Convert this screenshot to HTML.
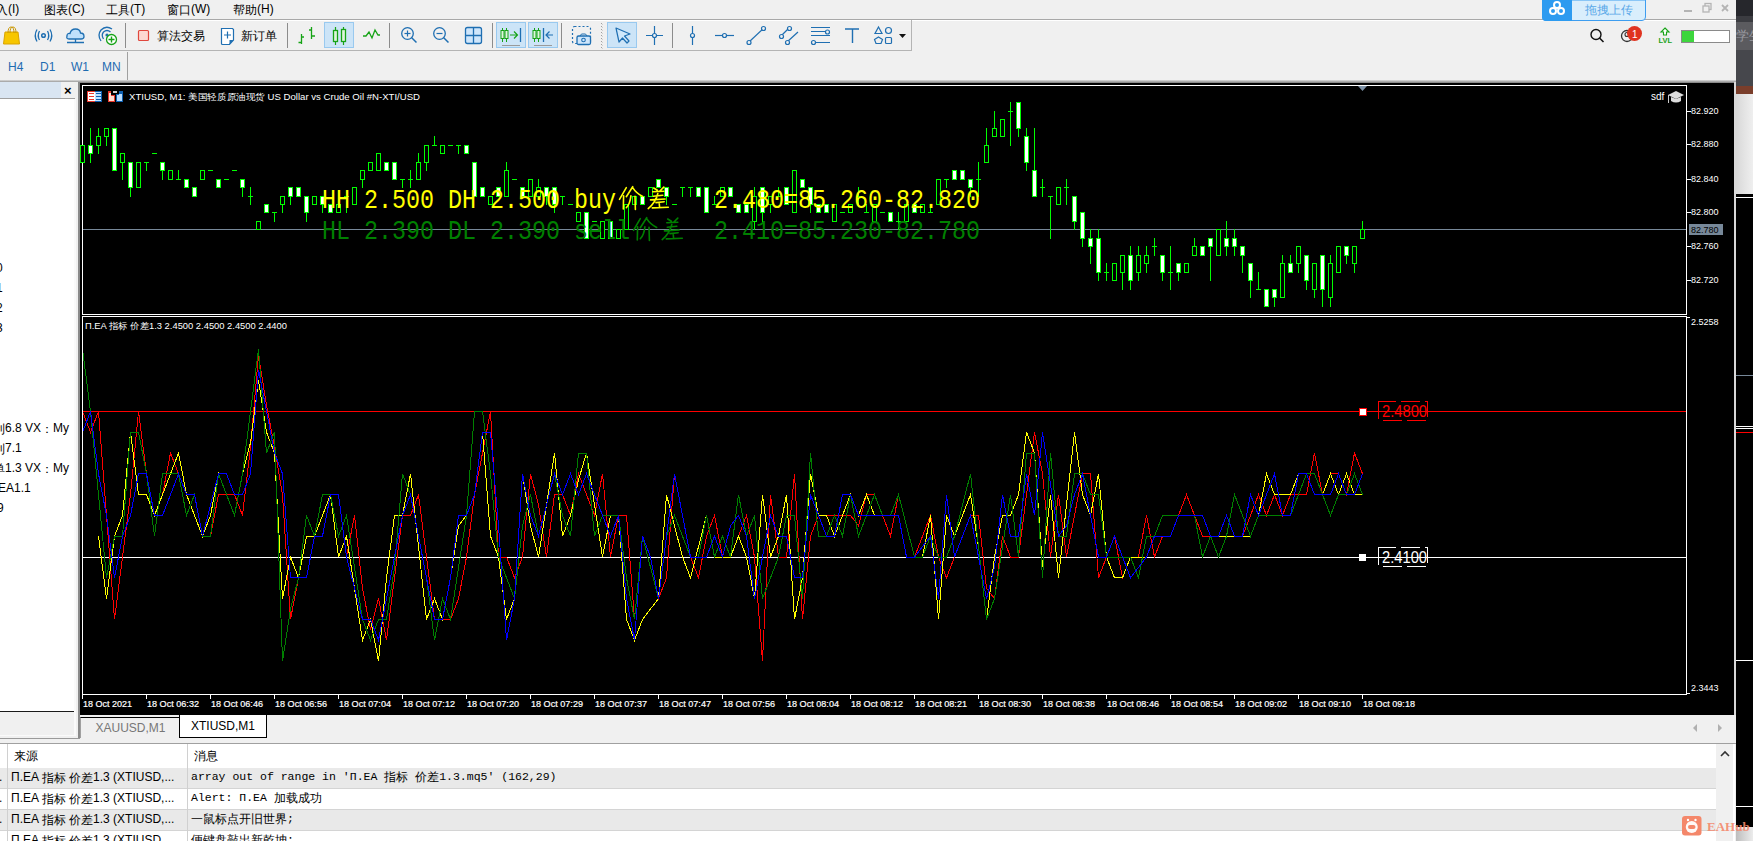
<!DOCTYPE html><html><head><meta charset="utf-8"><style>
*{margin:0;padding:0;box-sizing:border-box}
html,body{width:1753px;height:841px;overflow:hidden;background:#f0f0f0;font-family:"Liberation Sans",sans-serif;position:relative}
.a{position:absolute;white-space:nowrap}
.menu{font-size:12px;color:#000;top:2px}
.hl{position:absolute;background:#c8c8c8}
.tf{font-size:12px;color:#1e6bb0;top:60px}
.cj{display:inline-block;vertical-align:top;text-align:left}
</style></head><body><div class="a" style="left:1736px;top:0;width:17px;height:16px;background:#26272c"></div><div class="a" style="left:1736px;top:16px;width:17px;height:6px;background:#3b3c41"></div><div class="a" style="left:1736px;top:22px;width:17px;height:28px;background:#5b5b5f;color:#9a9aa0;font-size:13px;line-height:28px;overflow:hidden"><span class="cj" style="width:24px">学生</span></div><div class="a" style="left:1736px;top:50px;width:17px;height:36px;background:#46474c"></div><div class="a" style="left:1736px;top:86px;width:17px;height:8px;background:#7a3e2b"></div><div class="a" style="left:1736px;top:94px;width:17px;height:100px;background:linear-gradient(90deg,#d8d8d8,#efefef)"></div><div class="a" style="left:1736px;top:194px;width:17px;height:647px;background:#000"></div><div class="a" style="left:1736px;top:197px;width:17px;height:1px;background:#fff"></div><div class="a" style="left:1736px;top:375px;width:17px;height:1px;background:#778899"></div><div class="a" style="left:1736px;top:426px;width:17px;height:1px;background:#fff"></div><div class="a" style="left:1736px;top:428px;width:17px;height:1px;background:#fff"></div><div class="a" style="left:1736px;top:432px;width:17px;height:1px;background:#f00"></div><div class="a" style="left:1736px;top:660px;width:17px;height:1px;background:#fff"></div><div class="a" style="left:1736px;top:806px;width:17px;height:1px;background:#fff"></div><div class="a" style="left:1736px;top:827px;width:17px;height:2px;background:#e8e8e8"></div><div class="a" style="left:1736px;top:829px;width:17px;height:12px;background:linear-gradient(90deg,#bdbdbd,#ececec)"></div><div class="a menu" style="left:-4px"><span class="cj" style="width:12px">入</span>(I)</div><div class="a menu" style="left:44px"><span class="cj" style="width:24px">图表</span>(C)</div><div class="a menu" style="left:106px"><span class="cj" style="width:24px">工具</span>(T)</div><div class="a menu" style="left:167px"><span class="cj" style="width:24px">窗口</span>(W)</div><div class="a menu" style="left:233px"><span class="cj" style="width:24px">帮助</span>(H)</div><div class="hl" style="left:0;top:19px;width:1736px;height:1px;background:#a8a8a8"></div><div class="hl" style="left:0;top:20px;width:1736px;height:1px;background:#ffffff"></div><svg class="a" style="left:0;top:0" width="1753" height="52"><rect x="125.0" y="23" width="1" height="25" fill="#8c8c8c"/><rect x="287.0" y="23" width="1" height="25" fill="#8c8c8c"/><rect x="389.0" y="23" width="1" height="25" fill="#8c8c8c"/><rect x="492.0" y="23" width="1" height="25" fill="#8c8c8c"/><rect x="561.0" y="23" width="1" height="25" fill="#8c8c8c"/><rect x="672.0" y="23" width="1" height="25" fill="#8c8c8c"/><rect x="601" y="23" width="1" height="1" fill="#a0a0a0"/><rect x="602" y="24" width="1" height="1" fill="#d0d0d0"/><rect x="601" y="26" width="1" height="1" fill="#a0a0a0"/><rect x="602" y="27" width="1" height="1" fill="#d0d0d0"/><rect x="601" y="29" width="1" height="1" fill="#a0a0a0"/><rect x="602" y="30" width="1" height="1" fill="#d0d0d0"/><rect x="601" y="32" width="1" height="1" fill="#a0a0a0"/><rect x="602" y="33" width="1" height="1" fill="#d0d0d0"/><rect x="601" y="35" width="1" height="1" fill="#a0a0a0"/><rect x="602" y="36" width="1" height="1" fill="#d0d0d0"/><rect x="601" y="38" width="1" height="1" fill="#a0a0a0"/><rect x="602" y="39" width="1" height="1" fill="#d0d0d0"/><rect x="601" y="41" width="1" height="1" fill="#a0a0a0"/><rect x="602" y="42" width="1" height="1" fill="#d0d0d0"/><rect x="601" y="44" width="1" height="1" fill="#a0a0a0"/><rect x="602" y="45" width="1" height="1" fill="#d0d0d0"/><rect x="601" y="47" width="1" height="1" fill="#a0a0a0"/><rect x="602" y="48" width="1" height="1" fill="#d0d0d0"/><rect x="324.5" y="22.5" width="29" height="25" fill="#cce4f7" stroke="#99c9ef"/><rect x="496.5" y="22.5" width="29" height="25" fill="#cce4f7" stroke="#99c9ef"/><rect x="528.5" y="22.5" width="29" height="25" fill="#cce4f7" stroke="#99c9ef"/><rect x="607.5" y="22.5" width="29" height="25" fill="#cce4f7" stroke="#99c9ef"/><path d="M5 32 L18 32 L19.5 44 L3.5 44 Z" fill="#f7c600" stroke="#d9a300" stroke-width="1"/><path d="M8 33 Q8 27 11 27 Q14 27 14 33 M10 33 Q10 27 13 27 Q16 27 16 33" fill="none" stroke="#c99600" stroke-width="1"/><circle cx="43.5" cy="35.5" r="1.8" fill="none" stroke="#1f6fb2" stroke-width="1.5"/><path d="M39.5 31 Q37 35.5 39.5 40 M47.5 31 Q50 35.5 47.5 40 M37 29.5 Q33.5 35.5 37 41.5 M50 29.5 Q53.5 35.5 50 41.5" fill="none" stroke="#1f6fb2" stroke-width="1.3"/><path d="M69 39 Q66 39 67 36 Q67 33 70 33.5 Q71 29 75.5 29 Q80 29 80.5 33 Q84 33 84 36.5 Q84 39 81 39 Z" fill="#bfe0fb" stroke="#1f6fb2" stroke-width="1.3"/><path d="M75.5 39 L75.5 42 M67 42.5 L84 42.5" stroke="#1f6fb2" stroke-width="1.3"/><path d="M101 41 Q97 35 101 30 Q106 25 112 29 M103.5 39 Q101 35 103.5 32 Q107 29 110.5 32" fill="none" stroke="#1f6fb2" stroke-width="1.3"/><circle cx="107" cy="35" r="1.6" fill="#1f6fb2"/><circle cx="111.5" cy="39.5" r="5" fill="#fff" stroke="#16a316" stroke-width="1.3"/><path d="M111.5 36.5 L111.5 42.5 M108.5 39.5 L114.5 39.5" stroke="#16a316" stroke-width="1.4"/><rect x="138.5" y="30.5" width="10" height="10" rx="1" fill="#fdd9d2" stroke="#e0473d" stroke-width="1.2"/><path d="M221.5 28.5 L232.5 28.5 L233.5 29.5 L233.5 40 L229.5 44.5 L222.5 44.5 Q221.5 44.5 221.5 43.5 Z" fill="#fff" stroke="#1f6fb2" stroke-width="1.2"/><path d="M233.5 40 L229.5 40 L229.5 44.5 Z" fill="#1f6fb2"/><path d="M227.5 31.5 L227.5 38.5 M224 35 L231 35" stroke="#1f6fb2" stroke-width="1.2"/><path d="M301.5 34 L301.5 44 M298.5 42.5 L301.5 42.5 M301.5 37 L304 37 M311.5 27 L311.5 39 M309 30 L311.5 30 M311.5 36 L315 36" stroke="#16a316" stroke-width="1.3" fill="none"/><path d="M335.5 27 L335.5 45 M343.5 27 L343.5 45" stroke="#16a316" stroke-width="1.2"/><rect x="333.5" y="30.5" width="4" height="11" fill="#dff5df" stroke="#16a316" stroke-width="1.3"/><rect x="341.5" y="29.5" width="4" height="12" fill="#dff5df" stroke="#16a316" stroke-width="1.3"/><path d="M363 36 L366 36 L369 32 L372 38 L375 30 L378 35 L380 35" fill="none" stroke="#16a316" stroke-width="1.3"/><circle cx="407.5" cy="33.5" r="5.8" fill="none" stroke="#1f6fb2" stroke-width="1.3"/><path d="M411.5 37.5 L416.5 42.5" stroke="#1f6fb2" stroke-width="1.5"/><path d="M404.5 33.5 L410.5 33.5" stroke="#1f6fb2" stroke-width="1.2"/><path d="M407.5 30.5 L407.5 36.5" stroke="#1f6fb2" stroke-width="1.2"/><circle cx="439.5" cy="33.5" r="5.8" fill="none" stroke="#1f6fb2" stroke-width="1.3"/><path d="M443.5 37.5 L448.5 42.5" stroke="#1f6fb2" stroke-width="1.5"/><path d="M436.5 33.5 L442.5 33.5" stroke="#1f6fb2" stroke-width="1.2"/><rect x="465.5" y="27.5" width="16" height="16" rx="2" fill="#cfe6fb" stroke="#1f6fb2" stroke-width="1.3"/><path d="M473.5 27.5 L473.5 43.5 M465.5 35.5 L481.5 35.5" stroke="#1f6fb2" stroke-width="1.3"/><path d="M502.5 28 L502.5 42 M506.5 28 L506.5 42" stroke="#16a316" stroke-width="1"/><rect x="501" y="30.5" width="3" height="8" fill="#dff5df" stroke="#16a316"/><rect x="505" y="30.5" width="3" height="8" fill="#dff5df" stroke="#16a316"/><path d="M510 35 L517 35 M514 31.5 L517.5 35 L514 38.5" fill="none" stroke="#16a316" stroke-width="1.2"/><path d="M520.5 28 L520.5 42" stroke="#1f6fb2" stroke-width="1.3"/><path d="M502 45.5 L520 45.5" stroke="#9a9a9a"/><path d="M534.5 28 L534.5 42 M538.5 28 L538.5 42" stroke="#16a316" stroke-width="1"/><rect x="533" y="30.5" width="3" height="8" fill="#dff5df" stroke="#16a316"/><rect x="537" y="30.5" width="3" height="8" fill="#dff5df" stroke="#16a316"/><path d="M543.5 28 L543.5 42" stroke="#1f6fb2" stroke-width="1.3"/><path d="M553 35 L546 35 M549.5 31.5 L546 35 L549.5 38.5" fill="none" stroke="#1f6fb2" stroke-width="1.2"/><path d="M534 45.5 L552 45.5" stroke="#9a9a9a"/><rect x="572.5" y="26.5" width="18" height="17" rx="2" fill="none" stroke="#1f6fb2" stroke-width="1.2" stroke-dasharray="2 2"/><rect x="577" y="36" width="13.5" height="8.5" rx="1.5" fill="#cfe6fb" stroke="#1f6fb2" stroke-width="1.3"/><circle cx="583.5" cy="40" r="1.8" fill="none" stroke="#1f6fb2" stroke-width="1.1"/><path d="M580 36 L581.5 34 L585.5 34 L587 36" fill="none" stroke="#1f6fb2"/><path d="M616 28 L630 34 L624.5 36 L629 41 L627 43 L622.5 38 L619 42 Z" fill="#cfe8fb" stroke="#1f6fb2" stroke-width="1.2" stroke-linejoin="round"/><path d="M654.5 26 L654.5 45 M646 35.5 L663 35.5" stroke="#1f6fb2" stroke-width="1.2"/><circle cx="654.5" cy="35.5" r="2" fill="#f0f0f0" stroke="#1f6fb2" stroke-width="1.2"/><path d="M692.5 26 L692.5 45" stroke="#1f6fb2" stroke-width="1.2"/><circle cx="692.5" cy="35.5" r="2" fill="#f0f0f0" stroke="#1f6fb2" stroke-width="1.2"/><path d="M715 35.5 L734 35.5" stroke="#1f6fb2" stroke-width="1.2"/><circle cx="724.5" cy="35.5" r="2" fill="#f0f0f0" stroke="#1f6fb2" stroke-width="1.2"/><path d="M749 42 L764 28" stroke="#1f6fb2" stroke-width="1.2"/><circle cx="749" cy="42.5" r="2" fill="#f0f0f0" stroke="#1f6fb2" stroke-width="1.2"/><circle cx="763.5" cy="28.5" r="2" fill="#f0f0f0" stroke="#1f6fb2" stroke-width="1.2"/><path d="M781 36 L789 28 M787 42 L798 32" stroke="#1f6fb2" stroke-width="1.2"/><circle cx="781.5" cy="36.5" r="2" fill="#f0f0f0" stroke="#1f6fb2" stroke-width="1.2"/><circle cx="789.5" cy="28.5" r="2" fill="#f0f0f0" stroke="#1f6fb2" stroke-width="1.2"/><circle cx="787.5" cy="42.5" r="2" fill="#f0f0f0" stroke="#1f6fb2" stroke-width="1.2"/><path d="M811 27.5 L830 27.5 M811 31.5 L828 31.5 M811 35.5 L830 35.5 M815 42.5 L830 42.5" stroke="#1f6fb2" stroke-width="1.2"/><circle cx="827.5" cy="32" r="2" fill="#f0f0f0" stroke="#1f6fb2" stroke-width="1.2"/><circle cx="813.5" cy="42.5" r="2" fill="#f0f0f0" stroke="#1f6fb2" stroke-width="1.2"/><path d="M845 29 L859 29 M852.5 29 L852.5 43" stroke="#1f6fb2" stroke-width="1.4"/><path d="M878.5 27 L882 33.5 L875 33.5 Z" fill="none" stroke="#1f6fb2" stroke-width="1.2"/><circle cx="888.5" cy="30.5" r="3" fill="none" stroke="#1f6fb2" stroke-width="1.2"/><path d="M878.5 37 L882.5 39.5 L881 43.5 L876 43.5 L874.5 39.5 Z" fill="none" stroke="#1f6fb2" stroke-width="1.2"/><rect x="885.5" y="37.5" width="6" height="6" rx="1" fill="none" stroke="#1f6fb2" stroke-width="1.2"/><path d="M899 34 L906 34 L902.5 38 Z" fill="#111"/><circle cx="1596" cy="34.5" r="5" fill="none" stroke="#111" stroke-width="1.4"/><path d="M1599.5 38 L1603.5 42" stroke="#111" stroke-width="1.6"/><circle cx="1627" cy="36" r="5.5" fill="none" stroke="#333" stroke-width="1.3"/><circle cx="1627" cy="34.5" r="2" fill="none" stroke="#333" stroke-width="1.1"/><circle cx="1634.5" cy="33.5" r="7.5" fill="#e0331f"/><text x="1632" y="37.5" font-size="10" fill="#fff" font-family="Liberation Sans">1</text><path d="M1665 28 L1669 32 L1666.5 32 L1666.5 35 L1663.5 35 L1663.5 32 L1661 32 Z" fill="#fff" stroke="#17a317" stroke-width="1.1"/><text x="1658.5" y="43" font-size="7.5" font-weight="bold" fill="#17a317" font-family="Liberation Sans">LVL</text><rect x="1681.5" y="30.5" width="48" height="12" fill="#fff" stroke="#8a8a8a"/><rect x="1682" y="31" width="12" height="11" fill="#3dd63d"/><path d="M1542.5 0 L1645.5 0 L1645.5 17 Q1645.5 20.5 1642 20.5 L1546 20.5 Q1542.5 20.5 1542.5 17 Z" fill="#d9eefc" stroke="#3d9df0" stroke-width="1"/><path d="M1542 0 L1572 0 L1572 21 L1546 21 Q1542 21 1542 17 Z" fill="#2d9bf0"/><circle cx="1557" cy="5" r="3" fill="none" stroke="#fff" stroke-width="2"/><circle cx="1553" cy="11" r="3" fill="none" stroke="#fff" stroke-width="2"/><circle cx="1561" cy="11" r="3" fill="none" stroke="#fff" stroke-width="2"/><text x="1585" y="14" font-size="12" fill="#5aa8e8" font-family="Liberation Sans" textLength="48">拖拽上传</text><rect x="1684" y="10" width="8" height="2" fill="#b4b4b4"/><rect x="1705" y="3.5" width="6" height="6" fill="none" stroke="#b4b4b4" stroke-width="1.3"/><rect x="1703" y="6" width="6" height="6" fill="#f0f0f0" stroke="#b4b4b4" stroke-width="1.3"/><path d="M1722 5 L1728 11 M1728 5 L1722 11" stroke="#b4b4b4" stroke-width="1.8"/></svg><div class="a" style="left:157px;top:28px;font-size:12px;color:#000"><span class="cj" style="width:48px">算法交易</span></div><div class="a" style="left:241px;top:28px;font-size:12px;color:#000"><span class="cj" style="width:36px">新订单</span></div><div class="hl" style="left:0;top:50px;width:912px;height:1px;background:#b4b4b4"></div><div class="hl" style="left:911px;top:20px;width:1px;height:31px;background:#b4b4b4"></div><div class="a tf" style="left:8px">H4</div><div class="a tf" style="left:40px">D1</div><div class="a tf" style="left:71px">W1</div><div class="a tf" style="left:102px">MN</div><div class="hl" style="left:127px;top:52px;width:1px;height:29px;background:#a0a0a0"></div><div class="hl" style="left:0;top:80px;width:1736px;height:3px;background:linear-gradient(#dcdcdc,#7a7a7a)"></div><div class="a" style="left:80px;top:83px;width:1654px;height:632px;background:#000"></div><div class="a" style="left:78px;top:83px;width:2px;height:656px;background:#8a8a8a"></div><div class="a" style="left:1734px;top:82px;width:2px;height:633px;background:#d9d9d9"></div><div class="a" style="left:0;top:82px;width:78px;height:656px;background:#f0f0f0"></div><div class="a" style="left:74px;top:99px;width:2px;height:637px;background:#fafafa"></div><div class="a" style="left:0;top:735px;width:76px;height:1px;background:#fafafa"></div><div class="a" style="left:0;top:738px;width:80px;height:1px;background:#9a9a9a"></div><div class="a" style="left:0;top:82px;width:61px;height:16px;background:#d9e5f2"></div><div class="a" style="left:64px;top:83px;font-size:13px;font-weight:bold;color:#000">&#215;</div><div class="a" style="left:0;top:98px;width:75px;height:1px;background:#a0a0a0"></div><div class="a" style="left:0;top:99px;width:74px;height:612px;background:#fff"></div><div class="a" style="left:0;top:711px;width:74px;height:1px;background:#1a1a1a"></div><div class="a" style="left:0;top:99px;width:74px;height:612px;overflow:hidden"><div class="a" style="left:-7px;top:322px;font-size:12px;color:#000"><span class="cj" style="width:12px">利</span>6.8 VX<span class="cj" style="width:12px">：</span>My</div><div class="a" style="left:-7px;top:342px;font-size:12px;color:#000"><span class="cj" style="width:12px">利</span>7.1</div><div class="a" style="left:-7px;top:362px;font-size:12px;color:#000"><span class="cj" style="width:12px">单</span>1.3 VX<span class="cj" style="width:12px">：</span>My</div><div class="a" style="left:-2px;top:382px;font-size:12px;color:#000">EA1.1</div><div class="a" style="left:-3px;top:402px;font-size:12px;color:#000">9</div><div class="a" style="left:-4px;top:162px;font-size:12px;color:#000">0</div><div class="a" style="left:-4px;top:182px;font-size:12px;color:#000">1</div><div class="a" style="left:-4px;top:202px;font-size:12px;color:#000">2</div><div class="a" style="left:-4px;top:222px;font-size:12px;color:#000">3</div></div><svg class="a" style="left:0;top:0" width="1753" height="841" shape-rendering="crispEdges"><rect x="82" y="85" width="1605" height="1" fill="#fff"/><rect x="82" y="85" width="1" height="230" fill="#fff"/><rect x="1686" y="85" width="1" height="230" fill="#fff"/><rect x="82" y="314" width="1605" height="1" fill="#fff"/><rect x="82" y="316" width="1605" height="1" fill="#fff"/><rect x="82" y="316" width="1" height="379" fill="#fff"/><rect x="1686" y="316" width="1" height="379" fill="#fff"/><rect x="82" y="694" width="1605" height="1" fill="#fff"/><rect x="83" y="229" width="1603" height="1" fill="#778899"/><path d="M1358 86 L1367 86 L1362.5 91 Z" fill="#7d91a6" shape-rendering="auto"/><rect x="1686" y="111" width="5" height="1" fill="#fff"/><text x="1691" y="113.5" font-size="9" fill="#fff" font-family="Liberation Sans">82.920</text><rect x="1686" y="144" width="5" height="1" fill="#fff"/><text x="1691" y="146.5" font-size="9" fill="#fff" font-family="Liberation Sans">82.880</text><rect x="1686" y="179" width="5" height="1" fill="#fff"/><text x="1691" y="181.5" font-size="9" fill="#fff" font-family="Liberation Sans">82.840</text><rect x="1686" y="212" width="5" height="1" fill="#fff"/><text x="1691" y="214.5" font-size="9" fill="#fff" font-family="Liberation Sans">82.800</text><rect x="1686" y="246" width="5" height="1" fill="#fff"/><text x="1691" y="248.5" font-size="9" fill="#fff" font-family="Liberation Sans">82.760</text><rect x="1686" y="280" width="5" height="1" fill="#fff"/><text x="1691" y="282.5" font-size="9" fill="#fff" font-family="Liberation Sans">82.720</text><rect x="1689" y="224" width="34" height="11" fill="#778899"/><text x="1691" y="233" font-size="9" fill="#000" font-family="Liberation Sans">82.780</text><rect x="1686" y="317" width="4" height="1" fill="#fff"/><text x="1691" y="325" font-size="9" fill="#fff" font-family="Liberation Sans">2.5258</text><rect x="1686" y="693" width="4" height="1" fill="#fff"/><text x="1691" y="691" font-size="9" fill="#fff" font-family="Liberation Sans">2.3443</text><rect x="82" y="695" width="1" height="4" fill="#fff"/><text x="83" y="707" font-size="9" fill="#fff" stroke="#fff" stroke-width="0.2" font-family="Liberation Sans" textLength="49" lengthAdjust="spacingAndGlyphs">18 Oct 2021</text><rect x="146" y="695" width="1" height="4" fill="#fff"/><text x="147" y="707" font-size="9" fill="#fff" stroke="#fff" stroke-width="0.2" font-family="Liberation Sans" textLength="52" lengthAdjust="spacingAndGlyphs">18 Oct 06:32</text><rect x="210" y="695" width="1" height="4" fill="#fff"/><text x="211" y="707" font-size="9" fill="#fff" stroke="#fff" stroke-width="0.2" font-family="Liberation Sans" textLength="52" lengthAdjust="spacingAndGlyphs">18 Oct 06:46</text><rect x="274" y="695" width="1" height="4" fill="#fff"/><text x="275" y="707" font-size="9" fill="#fff" stroke="#fff" stroke-width="0.2" font-family="Liberation Sans" textLength="52" lengthAdjust="spacingAndGlyphs">18 Oct 06:56</text><rect x="338" y="695" width="1" height="4" fill="#fff"/><text x="339" y="707" font-size="9" fill="#fff" stroke="#fff" stroke-width="0.2" font-family="Liberation Sans" textLength="52" lengthAdjust="spacingAndGlyphs">18 Oct 07:04</text><rect x="402" y="695" width="1" height="4" fill="#fff"/><text x="403" y="707" font-size="9" fill="#fff" stroke="#fff" stroke-width="0.2" font-family="Liberation Sans" textLength="52" lengthAdjust="spacingAndGlyphs">18 Oct 07:12</text><rect x="466" y="695" width="1" height="4" fill="#fff"/><text x="467" y="707" font-size="9" fill="#fff" stroke="#fff" stroke-width="0.2" font-family="Liberation Sans" textLength="52" lengthAdjust="spacingAndGlyphs">18 Oct 07:20</text><rect x="530" y="695" width="1" height="4" fill="#fff"/><text x="531" y="707" font-size="9" fill="#fff" stroke="#fff" stroke-width="0.2" font-family="Liberation Sans" textLength="52" lengthAdjust="spacingAndGlyphs">18 Oct 07:29</text><rect x="594" y="695" width="1" height="4" fill="#fff"/><text x="595" y="707" font-size="9" fill="#fff" stroke="#fff" stroke-width="0.2" font-family="Liberation Sans" textLength="52" lengthAdjust="spacingAndGlyphs">18 Oct 07:37</text><rect x="658" y="695" width="1" height="4" fill="#fff"/><text x="659" y="707" font-size="9" fill="#fff" stroke="#fff" stroke-width="0.2" font-family="Liberation Sans" textLength="52" lengthAdjust="spacingAndGlyphs">18 Oct 07:47</text><rect x="722" y="695" width="1" height="4" fill="#fff"/><text x="723" y="707" font-size="9" fill="#fff" stroke="#fff" stroke-width="0.2" font-family="Liberation Sans" textLength="52" lengthAdjust="spacingAndGlyphs">18 Oct 07:56</text><rect x="786" y="695" width="1" height="4" fill="#fff"/><text x="787" y="707" font-size="9" fill="#fff" stroke="#fff" stroke-width="0.2" font-family="Liberation Sans" textLength="52" lengthAdjust="spacingAndGlyphs">18 Oct 08:04</text><rect x="850" y="695" width="1" height="4" fill="#fff"/><text x="851" y="707" font-size="9" fill="#fff" stroke="#fff" stroke-width="0.2" font-family="Liberation Sans" textLength="52" lengthAdjust="spacingAndGlyphs">18 Oct 08:12</text><rect x="914" y="695" width="1" height="4" fill="#fff"/><text x="915" y="707" font-size="9" fill="#fff" stroke="#fff" stroke-width="0.2" font-family="Liberation Sans" textLength="52" lengthAdjust="spacingAndGlyphs">18 Oct 08:21</text><rect x="978" y="695" width="1" height="4" fill="#fff"/><text x="979" y="707" font-size="9" fill="#fff" stroke="#fff" stroke-width="0.2" font-family="Liberation Sans" textLength="52" lengthAdjust="spacingAndGlyphs">18 Oct 08:30</text><rect x="1042" y="695" width="1" height="4" fill="#fff"/><text x="1043" y="707" font-size="9" fill="#fff" stroke="#fff" stroke-width="0.2" font-family="Liberation Sans" textLength="52" lengthAdjust="spacingAndGlyphs">18 Oct 08:38</text><rect x="1106" y="695" width="1" height="4" fill="#fff"/><text x="1107" y="707" font-size="9" fill="#fff" stroke="#fff" stroke-width="0.2" font-family="Liberation Sans" textLength="52" lengthAdjust="spacingAndGlyphs">18 Oct 08:46</text><rect x="1170" y="695" width="1" height="4" fill="#fff"/><text x="1171" y="707" font-size="9" fill="#fff" stroke="#fff" stroke-width="0.2" font-family="Liberation Sans" textLength="52" lengthAdjust="spacingAndGlyphs">18 Oct 08:54</text><rect x="1234" y="695" width="1" height="4" fill="#fff"/><text x="1235" y="707" font-size="9" fill="#fff" stroke="#fff" stroke-width="0.2" font-family="Liberation Sans" textLength="52" lengthAdjust="spacingAndGlyphs">18 Oct 09:02</text><rect x="1298" y="695" width="1" height="4" fill="#fff"/><text x="1299" y="707" font-size="9" fill="#fff" stroke="#fff" stroke-width="0.2" font-family="Liberation Sans" textLength="52" lengthAdjust="spacingAndGlyphs">18 Oct 09:10</text><rect x="1362" y="695" width="1" height="4" fill="#fff"/><text x="1363" y="707" font-size="9" fill="#fff" stroke="#fff" stroke-width="0.2" font-family="Liberation Sans" textLength="52" lengthAdjust="spacingAndGlyphs">18 Oct 09:18</text><rect x="83" y="411" width="1603" height="1" fill="#f00"/><rect x="83" y="557" width="1603" height="1" fill="#fff"/><g><rect x="82" y="145" width="1" height="18" fill="#0f0"/><rect x="80" y="145" width="5" height="18" fill="#0f0"/><rect x="81" y="146" width="3" height="16" fill="#000"/><rect x="90" y="128" width="1" height="35" fill="#0f0"/><rect x="88" y="145" width="5" height="9" fill="#0f0"/><rect x="89" y="146" width="3" height="7" fill="#fff"/><rect x="98" y="128" width="1" height="26" fill="#0f0"/><rect x="96" y="136" width="5" height="10" fill="#0f0"/><rect x="97" y="137" width="3" height="8" fill="#000"/><rect x="106" y="128" width="1" height="18" fill="#0f0"/><rect x="104" y="128" width="5" height="9" fill="#0f0"/><rect x="105" y="129" width="3" height="7" fill="#000"/><rect x="114" y="128" width="1" height="43" fill="#0f0"/><rect x="112" y="128" width="5" height="43" fill="#0f0"/><rect x="113" y="129" width="3" height="41" fill="#fff"/><rect x="122" y="153" width="1" height="27" fill="#0f0"/><rect x="120" y="153" width="5" height="10" fill="#0f0"/><rect x="121" y="154" width="3" height="8" fill="#000"/><rect x="130" y="162" width="1" height="35" fill="#0f0"/><rect x="128" y="162" width="5" height="26" fill="#0f0"/><rect x="129" y="163" width="3" height="24" fill="#fff"/><rect x="138" y="162" width="1" height="26" fill="#0f0"/><rect x="136" y="162" width="5" height="26" fill="#0f0"/><rect x="137" y="163" width="3" height="24" fill="#000"/><rect x="146" y="162" width="1" height="9" fill="#0f0"/><rect x="144" y="162" width="5" height="1" fill="#0f0"/><rect x="152" y="153" width="5" height="1" fill="#0f0"/><rect x="162" y="162" width="1" height="18" fill="#0f0"/><rect x="160" y="162" width="5" height="9" fill="#0f0"/><rect x="161" y="163" width="3" height="7" fill="#fff"/><rect x="170" y="170" width="1" height="10" fill="#0f0"/><rect x="168" y="170" width="5" height="10" fill="#0f0"/><rect x="169" y="171" width="3" height="8" fill="#000"/><rect x="178" y="170" width="1" height="10" fill="#0f0"/><rect x="176" y="179" width="5" height="1" fill="#0f0"/><rect x="186" y="179" width="1" height="9" fill="#0f0"/><rect x="184" y="179" width="5" height="9" fill="#0f0"/><rect x="185" y="180" width="3" height="7" fill="#fff"/><rect x="194" y="187" width="1" height="10" fill="#0f0"/><rect x="192" y="187" width="5" height="10" fill="#0f0"/><rect x="193" y="188" width="3" height="8" fill="#fff"/><rect x="202" y="170" width="1" height="10" fill="#0f0"/><rect x="200" y="170" width="5" height="10" fill="#0f0"/><rect x="201" y="171" width="3" height="8" fill="#000"/><rect x="208" y="170" width="5" height="1" fill="#0f0"/><rect x="218" y="179" width="1" height="9" fill="#0f0"/><rect x="216" y="179" width="5" height="9" fill="#0f0"/><rect x="217" y="180" width="3" height="7" fill="#fff"/><rect x="224" y="179" width="5" height="1" fill="#0f0"/><rect x="232" y="170" width="5" height="1" fill="#0f0"/><rect x="242" y="179" width="1" height="18" fill="#0f0"/><rect x="240" y="179" width="5" height="9" fill="#0f0"/><rect x="241" y="180" width="3" height="7" fill="#fff"/><rect x="250" y="187" width="1" height="18" fill="#0f0"/><rect x="248" y="196" width="5" height="1" fill="#0f0"/><rect x="258" y="221" width="1" height="9" fill="#0f0"/><rect x="256" y="221" width="5" height="9" fill="#0f0"/><rect x="257" y="222" width="3" height="7" fill="#000"/><rect x="266" y="204" width="1" height="9" fill="#0f0"/><rect x="264" y="204" width="5" height="9" fill="#0f0"/><rect x="265" y="205" width="3" height="7" fill="#fff"/><rect x="274" y="212" width="1" height="10" fill="#0f0"/><rect x="272" y="212" width="5" height="1" fill="#0f0"/><rect x="282" y="196" width="1" height="17" fill="#0f0"/><rect x="280" y="196" width="5" height="9" fill="#0f0"/><rect x="281" y="197" width="3" height="7" fill="#000"/><rect x="290" y="187" width="1" height="18" fill="#0f0"/><rect x="288" y="187" width="5" height="10" fill="#0f0"/><rect x="289" y="188" width="3" height="8" fill="#fff"/><rect x="298" y="187" width="1" height="10" fill="#0f0"/><rect x="296" y="187" width="5" height="10" fill="#0f0"/><rect x="297" y="188" width="3" height="8" fill="#fff"/><rect x="306" y="196" width="1" height="26" fill="#0f0"/><rect x="304" y="196" width="5" height="17" fill="#0f0"/><rect x="305" y="197" width="3" height="15" fill="#fff"/><rect x="314" y="196" width="1" height="9" fill="#0f0"/><rect x="312" y="196" width="5" height="9" fill="#0f0"/><rect x="313" y="197" width="3" height="7" fill="#000"/><rect x="322" y="196" width="1" height="17" fill="#0f0"/><rect x="320" y="196" width="5" height="9" fill="#0f0"/><rect x="321" y="197" width="3" height="7" fill="#fff"/><rect x="330" y="204" width="1" height="9" fill="#0f0"/><rect x="328" y="204" width="5" height="9" fill="#0f0"/><rect x="329" y="205" width="3" height="7" fill="#fff"/><rect x="338" y="204" width="1" height="9" fill="#0f0"/><rect x="336" y="204" width="5" height="9" fill="#0f0"/><rect x="337" y="205" width="3" height="7" fill="#000"/><rect x="346" y="196" width="1" height="17" fill="#0f0"/><rect x="344" y="196" width="5" height="1" fill="#0f0"/><rect x="354" y="187" width="1" height="18" fill="#0f0"/><rect x="352" y="187" width="5" height="18" fill="#0f0"/><rect x="353" y="188" width="3" height="16" fill="#000"/><rect x="362" y="170" width="1" height="18" fill="#0f0"/><rect x="360" y="170" width="5" height="10" fill="#0f0"/><rect x="361" y="171" width="3" height="8" fill="#000"/><rect x="370" y="162" width="1" height="9" fill="#0f0"/><rect x="368" y="162" width="5" height="9" fill="#0f0"/><rect x="369" y="163" width="3" height="7" fill="#000"/><rect x="378" y="153" width="1" height="18" fill="#0f0"/><rect x="376" y="153" width="5" height="18" fill="#0f0"/><rect x="377" y="154" width="3" height="16" fill="#000"/><rect x="386" y="162" width="1" height="9" fill="#0f0"/><rect x="384" y="162" width="5" height="9" fill="#0f0"/><rect x="385" y="163" width="3" height="7" fill="#fff"/><rect x="394" y="162" width="1" height="18" fill="#0f0"/><rect x="392" y="162" width="5" height="18" fill="#0f0"/><rect x="393" y="163" width="3" height="16" fill="#fff"/><rect x="402" y="179" width="1" height="9" fill="#0f0"/><rect x="400" y="179" width="5" height="1" fill="#0f0"/><rect x="410" y="170" width="1" height="18" fill="#0f0"/><rect x="408" y="179" width="5" height="1" fill="#0f0"/><rect x="418" y="153" width="1" height="27" fill="#0f0"/><rect x="416" y="162" width="5" height="18" fill="#0f0"/><rect x="417" y="163" width="3" height="16" fill="#000"/><rect x="426" y="145" width="1" height="26" fill="#0f0"/><rect x="424" y="145" width="5" height="18" fill="#0f0"/><rect x="425" y="146" width="3" height="16" fill="#000"/><rect x="434" y="136" width="1" height="10" fill="#0f0"/><rect x="432" y="145" width="5" height="1" fill="#0f0"/><rect x="442" y="145" width="1" height="9" fill="#0f0"/><rect x="440" y="145" width="5" height="9" fill="#0f0"/><rect x="441" y="146" width="3" height="7" fill="#000"/><rect x="448" y="145" width="5" height="1" fill="#0f0"/><rect x="458" y="145" width="1" height="9" fill="#0f0"/><rect x="456" y="145" width="5" height="1" fill="#0f0"/><rect x="466" y="145" width="1" height="9" fill="#0f0"/><rect x="464" y="145" width="5" height="9" fill="#0f0"/><rect x="465" y="146" width="3" height="7" fill="#fff"/><rect x="474" y="162" width="1" height="35" fill="#0f0"/><rect x="472" y="162" width="5" height="35" fill="#0f0"/><rect x="473" y="163" width="3" height="33" fill="#fff"/><rect x="482" y="187" width="1" height="10" fill="#0f0"/><rect x="480" y="187" width="5" height="10" fill="#0f0"/><rect x="481" y="188" width="3" height="8" fill="#fff"/><rect x="490" y="196" width="1" height="9" fill="#0f0"/><rect x="488" y="196" width="5" height="9" fill="#0f0"/><rect x="489" y="197" width="3" height="7" fill="#000"/><rect x="498" y="187" width="1" height="10" fill="#0f0"/><rect x="496" y="187" width="5" height="10" fill="#0f0"/><rect x="497" y="188" width="3" height="8" fill="#fff"/><rect x="506" y="162" width="1" height="35" fill="#0f0"/><rect x="504" y="170" width="5" height="27" fill="#0f0"/><rect x="505" y="171" width="3" height="25" fill="#000"/><rect x="512" y="179" width="5" height="1" fill="#0f0"/><rect x="522" y="187" width="1" height="10" fill="#0f0"/><rect x="520" y="187" width="5" height="10" fill="#0f0"/><rect x="521" y="188" width="3" height="8" fill="#fff"/><rect x="530" y="179" width="1" height="18" fill="#0f0"/><rect x="528" y="179" width="5" height="18" fill="#0f0"/><rect x="529" y="180" width="3" height="16" fill="#000"/><rect x="538" y="179" width="1" height="18" fill="#0f0"/><rect x="536" y="187" width="5" height="10" fill="#0f0"/><rect x="537" y="188" width="3" height="8" fill="#000"/><rect x="546" y="187" width="1" height="18" fill="#0f0"/><rect x="544" y="187" width="5" height="10" fill="#0f0"/><rect x="545" y="188" width="3" height="8" fill="#fff"/><rect x="554" y="187" width="1" height="26" fill="#0f0"/><rect x="552" y="187" width="5" height="18" fill="#0f0"/><rect x="553" y="188" width="3" height="16" fill="#fff"/><rect x="562" y="196" width="1" height="9" fill="#0f0"/><rect x="560" y="196" width="5" height="1" fill="#0f0"/><rect x="568" y="204" width="5" height="1" fill="#0f0"/><rect x="578" y="212" width="1" height="10" fill="#0f0"/><rect x="576" y="212" width="5" height="10" fill="#0f0"/><rect x="577" y="213" width="3" height="8" fill="#000"/><rect x="586" y="212" width="1" height="27" fill="#0f0"/><rect x="584" y="212" width="5" height="27" fill="#0f0"/><rect x="585" y="213" width="3" height="25" fill="#fff"/><rect x="592" y="221" width="5" height="1" fill="#0f0"/><rect x="602" y="221" width="1" height="18" fill="#0f0"/><rect x="600" y="221" width="5" height="18" fill="#0f0"/><rect x="601" y="222" width="3" height="16" fill="#000"/><rect x="610" y="221" width="1" height="18" fill="#0f0"/><rect x="608" y="221" width="5" height="18" fill="#0f0"/><rect x="609" y="222" width="3" height="16" fill="#fff"/><rect x="618" y="229" width="1" height="10" fill="#0f0"/><rect x="616" y="229" width="5" height="10" fill="#0f0"/><rect x="617" y="230" width="3" height="8" fill="#000"/><rect x="626" y="204" width="1" height="26" fill="#0f0"/><rect x="624" y="204" width="5" height="26" fill="#0f0"/><rect x="625" y="205" width="3" height="24" fill="#000"/><rect x="634" y="196" width="1" height="9" fill="#0f0"/><rect x="632" y="196" width="5" height="9" fill="#0f0"/><rect x="633" y="197" width="3" height="7" fill="#000"/><rect x="642" y="196" width="1" height="9" fill="#0f0"/><rect x="640" y="196" width="5" height="9" fill="#0f0"/><rect x="641" y="197" width="3" height="7" fill="#fff"/><rect x="650" y="187" width="1" height="10" fill="#0f0"/><rect x="648" y="187" width="5" height="10" fill="#0f0"/><rect x="649" y="188" width="3" height="8" fill="#000"/><rect x="658" y="179" width="1" height="9" fill="#0f0"/><rect x="656" y="179" width="5" height="9" fill="#0f0"/><rect x="657" y="180" width="3" height="7" fill="#fff"/><rect x="666" y="187" width="1" height="18" fill="#0f0"/><rect x="664" y="187" width="5" height="10" fill="#0f0"/><rect x="665" y="188" width="3" height="8" fill="#fff"/><rect x="672" y="204" width="5" height="1" fill="#0f0"/><rect x="682" y="187" width="1" height="10" fill="#0f0"/><rect x="680" y="187" width="5" height="1" fill="#0f0"/><rect x="690" y="187" width="1" height="10" fill="#0f0"/><rect x="688" y="187" width="5" height="1" fill="#0f0"/><rect x="698" y="187" width="1" height="10" fill="#0f0"/><rect x="696" y="187" width="5" height="10" fill="#0f0"/><rect x="697" y="188" width="3" height="8" fill="#fff"/><rect x="706" y="187" width="1" height="26" fill="#0f0"/><rect x="704" y="187" width="5" height="26" fill="#0f0"/><rect x="705" y="188" width="3" height="24" fill="#fff"/><rect x="714" y="196" width="1" height="9" fill="#0f0"/><rect x="712" y="204" width="5" height="1" fill="#0f0"/><rect x="722" y="187" width="1" height="10" fill="#0f0"/><rect x="720" y="187" width="5" height="10" fill="#0f0"/><rect x="721" y="188" width="3" height="8" fill="#000"/><rect x="730" y="187" width="1" height="10" fill="#0f0"/><rect x="728" y="187" width="5" height="10" fill="#0f0"/><rect x="729" y="188" width="3" height="8" fill="#fff"/><rect x="738" y="204" width="1" height="9" fill="#0f0"/><rect x="736" y="204" width="5" height="9" fill="#0f0"/><rect x="737" y="205" width="3" height="7" fill="#fff"/><rect x="746" y="204" width="1" height="9" fill="#0f0"/><rect x="744" y="204" width="5" height="9" fill="#0f0"/><rect x="745" y="205" width="3" height="7" fill="#fff"/><rect x="754" y="187" width="1" height="43" fill="#0f0"/><rect x="752" y="196" width="5" height="26" fill="#0f0"/><rect x="753" y="197" width="3" height="24" fill="#000"/><rect x="762" y="187" width="1" height="35" fill="#0f0"/><rect x="760" y="187" width="5" height="26" fill="#0f0"/><rect x="761" y="188" width="3" height="24" fill="#fff"/><rect x="770" y="196" width="1" height="17" fill="#0f0"/><rect x="768" y="196" width="5" height="9" fill="#0f0"/><rect x="769" y="197" width="3" height="7" fill="#000"/><rect x="778" y="187" width="1" height="10" fill="#0f0"/><rect x="776" y="196" width="5" height="1" fill="#0f0"/><rect x="786" y="187" width="1" height="18" fill="#0f0"/><rect x="784" y="187" width="5" height="18" fill="#0f0"/><rect x="785" y="188" width="3" height="16" fill="#fff"/><rect x="794" y="170" width="1" height="43" fill="#0f0"/><rect x="792" y="170" width="5" height="43" fill="#0f0"/><rect x="793" y="171" width="3" height="41" fill="#000"/><rect x="802" y="179" width="1" height="9" fill="#0f0"/><rect x="800" y="179" width="5" height="9" fill="#0f0"/><rect x="801" y="180" width="3" height="7" fill="#fff"/><rect x="810" y="187" width="1" height="26" fill="#0f0"/><rect x="808" y="187" width="5" height="18" fill="#0f0"/><rect x="809" y="188" width="3" height="16" fill="#fff"/><rect x="818" y="204" width="1" height="9" fill="#0f0"/><rect x="816" y="204" width="5" height="9" fill="#0f0"/><rect x="817" y="205" width="3" height="7" fill="#fff"/><rect x="826" y="204" width="1" height="9" fill="#0f0"/><rect x="824" y="204" width="5" height="9" fill="#0f0"/><rect x="825" y="205" width="3" height="7" fill="#fff"/><rect x="834" y="204" width="1" height="18" fill="#0f0"/><rect x="832" y="204" width="5" height="18" fill="#0f0"/><rect x="833" y="205" width="3" height="16" fill="#000"/><rect x="840" y="212" width="5" height="1" fill="#0f0"/><rect x="850" y="204" width="1" height="9" fill="#0f0"/><rect x="848" y="204" width="5" height="9" fill="#0f0"/><rect x="849" y="205" width="3" height="7" fill="#000"/><rect x="858" y="187" width="1" height="18" fill="#0f0"/><rect x="856" y="196" width="5" height="1" fill="#0f0"/><rect x="866" y="204" width="1" height="9" fill="#0f0"/><rect x="864" y="212" width="5" height="1" fill="#0f0"/><rect x="874" y="204" width="1" height="18" fill="#0f0"/><rect x="872" y="204" width="5" height="18" fill="#0f0"/><rect x="873" y="205" width="3" height="16" fill="#000"/><rect x="880" y="212" width="5" height="1" fill="#0f0"/><rect x="890" y="212" width="1" height="10" fill="#0f0"/><rect x="888" y="212" width="5" height="10" fill="#0f0"/><rect x="889" y="213" width="3" height="8" fill="#fff"/><rect x="898" y="212" width="1" height="18" fill="#0f0"/><rect x="896" y="221" width="5" height="1" fill="#0f0"/><rect x="906" y="204" width="1" height="18" fill="#0f0"/><rect x="904" y="204" width="5" height="18" fill="#0f0"/><rect x="905" y="205" width="3" height="16" fill="#000"/><rect x="914" y="204" width="1" height="9" fill="#0f0"/><rect x="912" y="204" width="5" height="9" fill="#0f0"/><rect x="913" y="205" width="3" height="7" fill="#fff"/><rect x="922" y="204" width="1" height="9" fill="#0f0"/><rect x="920" y="204" width="5" height="9" fill="#0f0"/><rect x="921" y="205" width="3" height="7" fill="#000"/><rect x="930" y="204" width="1" height="9" fill="#0f0"/><rect x="928" y="212" width="5" height="1" fill="#0f0"/><rect x="938" y="179" width="1" height="26" fill="#0f0"/><rect x="936" y="179" width="5" height="26" fill="#0f0"/><rect x="937" y="180" width="3" height="24" fill="#000"/><rect x="946" y="179" width="1" height="9" fill="#0f0"/><rect x="944" y="179" width="5" height="1" fill="#0f0"/><rect x="954" y="170" width="1" height="10" fill="#0f0"/><rect x="952" y="170" width="5" height="10" fill="#0f0"/><rect x="953" y="171" width="3" height="8" fill="#fff"/><rect x="962" y="170" width="1" height="10" fill="#0f0"/><rect x="960" y="170" width="5" height="10" fill="#0f0"/><rect x="961" y="171" width="3" height="8" fill="#fff"/><rect x="970" y="179" width="1" height="18" fill="#0f0"/><rect x="968" y="179" width="5" height="9" fill="#0f0"/><rect x="969" y="180" width="3" height="7" fill="#fff"/><rect x="978" y="162" width="1" height="35" fill="#0f0"/><rect x="976" y="179" width="5" height="1" fill="#0f0"/><rect x="986" y="128" width="1" height="35" fill="#0f0"/><rect x="984" y="145" width="5" height="18" fill="#0f0"/><rect x="985" y="146" width="3" height="16" fill="#000"/><rect x="994" y="111" width="1" height="26" fill="#0f0"/><rect x="992" y="128" width="5" height="9" fill="#0f0"/><rect x="993" y="129" width="3" height="7" fill="#000"/><rect x="1002" y="119" width="1" height="18" fill="#0f0"/><rect x="1000" y="119" width="5" height="18" fill="#0f0"/><rect x="1001" y="120" width="3" height="16" fill="#000"/><rect x="1010" y="102" width="1" height="44" fill="#0f0"/><rect x="1008" y="111" width="5" height="1" fill="#0f0"/><rect x="1018" y="102" width="1" height="35" fill="#0f0"/><rect x="1016" y="102" width="5" height="27" fill="#0f0"/><rect x="1017" y="103" width="3" height="25" fill="#fff"/><rect x="1026" y="128" width="1" height="43" fill="#0f0"/><rect x="1024" y="136" width="5" height="27" fill="#0f0"/><rect x="1025" y="137" width="3" height="25" fill="#fff"/><rect x="1034" y="128" width="1" height="69" fill="#0f0"/><rect x="1032" y="170" width="5" height="27" fill="#0f0"/><rect x="1033" y="171" width="3" height="25" fill="#fff"/><rect x="1042" y="179" width="1" height="18" fill="#0f0"/><rect x="1040" y="187" width="5" height="1" fill="#0f0"/><rect x="1050" y="196" width="1" height="43" fill="#0f0"/><rect x="1048" y="196" width="5" height="1" fill="#0f0"/><rect x="1058" y="187" width="1" height="18" fill="#0f0"/><rect x="1056" y="187" width="5" height="18" fill="#0f0"/><rect x="1057" y="188" width="3" height="16" fill="#000"/><rect x="1066" y="179" width="1" height="26" fill="#0f0"/><rect x="1064" y="187" width="5" height="1" fill="#0f0"/><rect x="1074" y="196" width="1" height="34" fill="#0f0"/><rect x="1072" y="196" width="5" height="26" fill="#0f0"/><rect x="1073" y="197" width="3" height="24" fill="#fff"/><rect x="1082" y="212" width="1" height="35" fill="#0f0"/><rect x="1080" y="212" width="5" height="27" fill="#0f0"/><rect x="1081" y="213" width="3" height="25" fill="#fff"/><rect x="1090" y="229" width="1" height="35" fill="#0f0"/><rect x="1088" y="238" width="5" height="9" fill="#0f0"/><rect x="1089" y="239" width="3" height="7" fill="#fff"/><rect x="1098" y="229" width="1" height="52" fill="#0f0"/><rect x="1096" y="238" width="5" height="35" fill="#0f0"/><rect x="1097" y="239" width="3" height="33" fill="#fff"/><rect x="1106" y="263" width="1" height="18" fill="#0f0"/><rect x="1104" y="272" width="5" height="1" fill="#0f0"/><rect x="1114" y="263" width="1" height="18" fill="#0f0"/><rect x="1112" y="263" width="5" height="18" fill="#0f0"/><rect x="1113" y="264" width="3" height="16" fill="#000"/><rect x="1122" y="255" width="1" height="35" fill="#0f0"/><rect x="1120" y="255" width="5" height="18" fill="#0f0"/><rect x="1121" y="256" width="3" height="16" fill="#000"/><rect x="1130" y="246" width="1" height="44" fill="#0f0"/><rect x="1128" y="255" width="5" height="26" fill="#0f0"/><rect x="1129" y="256" width="3" height="24" fill="#fff"/><rect x="1138" y="246" width="1" height="35" fill="#0f0"/><rect x="1136" y="255" width="5" height="18" fill="#0f0"/><rect x="1137" y="256" width="3" height="16" fill="#000"/><rect x="1146" y="246" width="1" height="27" fill="#0f0"/><rect x="1144" y="255" width="5" height="9" fill="#0f0"/><rect x="1145" y="256" width="3" height="7" fill="#000"/><rect x="1154" y="238" width="1" height="18" fill="#0f0"/><rect x="1152" y="246" width="5" height="1" fill="#0f0"/><rect x="1162" y="255" width="1" height="26" fill="#0f0"/><rect x="1160" y="255" width="5" height="18" fill="#0f0"/><rect x="1161" y="256" width="3" height="16" fill="#fff"/><rect x="1170" y="246" width="1" height="44" fill="#0f0"/><rect x="1168" y="272" width="5" height="1" fill="#0f0"/><rect x="1178" y="263" width="1" height="18" fill="#0f0"/><rect x="1176" y="263" width="5" height="10" fill="#0f0"/><rect x="1177" y="264" width="3" height="8" fill="#fff"/><rect x="1186" y="263" width="1" height="10" fill="#0f0"/><rect x="1184" y="263" width="5" height="10" fill="#0f0"/><rect x="1185" y="264" width="3" height="8" fill="#000"/><rect x="1194" y="238" width="1" height="18" fill="#0f0"/><rect x="1192" y="246" width="5" height="10" fill="#0f0"/><rect x="1193" y="247" width="3" height="8" fill="#000"/><rect x="1202" y="246" width="1" height="10" fill="#0f0"/><rect x="1200" y="246" width="5" height="10" fill="#0f0"/><rect x="1201" y="247" width="3" height="8" fill="#fff"/><rect x="1210" y="238" width="1" height="43" fill="#0f0"/><rect x="1208" y="238" width="5" height="9" fill="#0f0"/><rect x="1209" y="239" width="3" height="7" fill="#fff"/><rect x="1218" y="229" width="1" height="27" fill="#0f0"/><rect x="1216" y="229" width="5" height="27" fill="#0f0"/><rect x="1217" y="230" width="3" height="25" fill="#000"/><rect x="1226" y="221" width="1" height="35" fill="#0f0"/><rect x="1224" y="238" width="5" height="9" fill="#0f0"/><rect x="1225" y="239" width="3" height="7" fill="#fff"/><rect x="1234" y="229" width="1" height="27" fill="#0f0"/><rect x="1232" y="238" width="5" height="9" fill="#0f0"/><rect x="1233" y="239" width="3" height="7" fill="#fff"/><rect x="1242" y="246" width="1" height="27" fill="#0f0"/><rect x="1240" y="246" width="5" height="10" fill="#0f0"/><rect x="1241" y="247" width="3" height="8" fill="#fff"/><rect x="1250" y="263" width="1" height="35" fill="#0f0"/><rect x="1248" y="263" width="5" height="18" fill="#0f0"/><rect x="1249" y="264" width="3" height="16" fill="#fff"/><rect x="1258" y="272" width="1" height="18" fill="#0f0"/><rect x="1256" y="289" width="5" height="1" fill="#0f0"/><rect x="1266" y="289" width="1" height="18" fill="#0f0"/><rect x="1264" y="289" width="5" height="18" fill="#0f0"/><rect x="1265" y="290" width="3" height="16" fill="#fff"/><rect x="1274" y="289" width="1" height="18" fill="#0f0"/><rect x="1272" y="289" width="5" height="9" fill="#0f0"/><rect x="1273" y="290" width="3" height="7" fill="#fff"/><rect x="1282" y="255" width="1" height="43" fill="#0f0"/><rect x="1280" y="263" width="5" height="35" fill="#0f0"/><rect x="1281" y="264" width="3" height="33" fill="#000"/><rect x="1290" y="255" width="1" height="18" fill="#0f0"/><rect x="1288" y="263" width="5" height="10" fill="#0f0"/><rect x="1289" y="264" width="3" height="8" fill="#fff"/><rect x="1298" y="246" width="1" height="27" fill="#0f0"/><rect x="1296" y="246" width="5" height="18" fill="#0f0"/><rect x="1297" y="247" width="3" height="16" fill="#000"/><rect x="1306" y="255" width="1" height="35" fill="#0f0"/><rect x="1304" y="255" width="5" height="26" fill="#0f0"/><rect x="1305" y="256" width="3" height="24" fill="#fff"/><rect x="1314" y="263" width="1" height="35" fill="#0f0"/><rect x="1312" y="263" width="5" height="27" fill="#0f0"/><rect x="1313" y="264" width="3" height="25" fill="#000"/><rect x="1322" y="255" width="1" height="52" fill="#0f0"/><rect x="1320" y="255" width="5" height="35" fill="#0f0"/><rect x="1321" y="256" width="3" height="33" fill="#fff"/><rect x="1330" y="255" width="1" height="52" fill="#0f0"/><rect x="1328" y="263" width="5" height="35" fill="#0f0"/><rect x="1329" y="264" width="3" height="33" fill="#000"/><rect x="1338" y="246" width="1" height="27" fill="#0f0"/><rect x="1336" y="246" width="5" height="27" fill="#0f0"/><rect x="1337" y="247" width="3" height="25" fill="#000"/><rect x="1346" y="246" width="1" height="18" fill="#0f0"/><rect x="1344" y="246" width="5" height="10" fill="#0f0"/><rect x="1345" y="247" width="3" height="8" fill="#fff"/><rect x="1354" y="246" width="1" height="27" fill="#0f0"/><rect x="1352" y="246" width="5" height="18" fill="#0f0"/><rect x="1353" y="247" width="3" height="16" fill="#000"/><rect x="1362" y="221" width="1" height="18" fill="#0f0"/><rect x="1360" y="229" width="5" height="10" fill="#0f0"/><rect x="1361" y="230" width="3" height="8" fill="#000"/></g><g fill="none" stroke-width="1" shape-rendering="crispEdges" clip-path="url(#lp)"><clipPath id="lp"><rect x="83" y="317" width="1603" height="377"/></clipPath><polyline points="82.5,411.4 90.5,432.2 98.5,411.4 106.5,515.4 114.5,619.4 122.5,557.0 130.5,494.6 138.5,411.4 146.5,473.8 154.5,515.4 162.5,494.6 170.5,453.0 178.5,473.8 186.5,494.6 194.5,515.4 202.5,536.2 210.5,536.2 218.5,494.6 226.5,494.6 234.5,494.6 242.5,515.4 250.5,446.8 258.5,355.2 266.5,405.2 274.5,446.8 282.5,494.6 290.5,619.4 298.5,577.8 306.5,536.2 314.5,536.2 322.5,494.6 330.5,494.6 338.5,494.6 346.5,557.0 354.5,515.4 362.5,588.2 370.5,629.8 378.5,598.6 386.5,640.2 394.5,577.8 402.5,515.4 410.5,515.4 418.5,494.6 426.5,557.0 434.5,619.4 442.5,619.4 450.5,619.4 458.5,598.6 466.5,557.0 474.5,494.6 482.5,453.0 490.5,411.4 498.5,557.0 506.5,557.0 514.5,577.8 522.5,557.0 530.5,473.8 538.5,505.0 546.5,557.0 554.5,494.6 562.5,494.6 570.5,515.4 578.5,473.8 586.5,494.6 594.5,515.4 602.5,473.8 610.5,557.0 618.5,515.4 626.5,515.4 634.5,619.4 642.5,536.2 650.5,567.4 658.5,598.6 666.5,577.8 674.5,473.8 682.5,515.4 690.5,557.0 698.5,577.8 706.5,536.2 714.5,515.4 722.5,557.0 730.5,557.0 738.5,536.2 746.5,515.4 754.5,557.0 762.5,661.0 770.5,494.6 778.5,557.0 786.5,557.0 794.5,473.8 802.5,619.4 810.5,536.2 818.5,515.4 826.5,515.4 834.5,515.4 842.5,515.4 850.5,515.4 858.5,525.8 866.5,494.6 874.5,494.6 882.5,515.4 890.5,536.2 898.5,494.6 906.5,525.8 914.5,557.0 922.5,536.2 930.5,515.4 938.5,557.0 946.5,577.8 954.5,557.0 962.5,536.2 970.5,515.4 978.5,515.4 986.5,588.2 994.5,598.6 1002.5,536.2 1010.5,557.0 1018.5,557.0 1026.5,494.6 1034.5,432.2 1042.5,473.8 1050.5,557.0 1058.5,494.6 1066.5,557.0 1074.5,515.4 1082.5,473.8 1090.5,473.8 1098.5,577.8 1106.5,557.0 1114.5,536.2 1122.5,577.8 1130.5,557.0 1138.5,557.0 1146.5,515.4 1154.5,557.0 1162.5,536.2 1170.5,536.2 1178.5,515.4 1186.5,494.6 1194.5,515.4 1202.5,536.2 1210.5,536.2 1218.5,536.2 1226.5,536.2 1234.5,536.2 1242.5,536.2 1250.5,515.4 1258.5,494.6 1266.5,515.4 1274.5,494.6 1282.5,515.4 1290.5,494.6 1298.5,494.6 1306.5,494.6 1314.5,453.0 1322.5,494.6 1330.5,473.8 1338.5,473.8 1346.5,494.6 1354.5,453.0 1362.5,473.8" stroke="#ff0000"/><polyline points="98.5,536.2 106.5,598.6 114.5,536.2 122.5,515.4 130.5,432.2 138.5,494.6 146.5,494.6 154.5,515.4 162.5,494.6 170.5,473.8 178.5,453.0 186.5,494.6 194.5,515.4 202.5,536.2 210.5,515.4 218.5,473.8 226.5,494.6 234.5,515.4 242.5,473.8 250.5,442.6 258.5,380.2 266.5,432.2 274.5,453.0 282.5,598.6 290.5,557.0 298.5,577.8 306.5,536.2 314.5,536.2 322.5,515.4 330.5,494.6 338.5,557.0 346.5,536.2 354.5,588.2 362.5,640.2 370.5,619.4 378.5,661.0 386.5,577.8 394.5,515.4 402.5,515.4 410.5,473.8 418.5,546.6 426.5,619.4 434.5,598.6 442.5,619.4 450.5,577.8 458.5,525.8 466.5,515.4 474.5,494.6 482.5,432.2 490.5,536.2 498.5,557.0 506.5,619.4 514.5,598.6 522.5,473.8 530.5,525.8 538.5,557.0 546.5,505.0 554.5,453.0 562.5,536.2 570.5,515.4 578.5,480.0 586.5,453.0 594.5,505.0 602.5,557.0 610.5,515.4 618.5,515.4 626.5,619.4 634.5,640.2 642.5,619.4 650.5,609.0 658.5,598.6 666.5,494.6 674.5,525.8 682.5,557.0 690.5,577.8 698.5,546.6 706.5,515.4 714.5,557.0 722.5,557.0 730.5,557.0 738.5,536.2 746.5,557.0 754.5,598.6 762.5,494.6 770.5,557.0 778.5,536.2 786.5,494.6 794.5,619.4 802.5,577.8 810.5,473.8 818.5,515.4 826.5,515.4 834.5,536.2 842.5,515.4 850.5,494.6 858.5,515.4 866.5,494.6 874.5,515.4 882.5,515.4 890.5,515.4 898.5,515.4 906.5,557.0 914.5,557.0 922.5,557.0 930.5,515.4 938.5,619.4 946.5,515.4 954.5,536.2 962.5,515.4 970.5,494.6 978.5,546.6 986.5,619.4 994.5,557.0 1002.5,515.4 1010.5,515.4 1018.5,494.6 1026.5,432.2 1034.5,453.0 1042.5,567.4 1050.5,494.6 1058.5,577.8 1066.5,505.0 1074.5,432.2 1082.5,494.6 1090.5,515.4 1098.5,473.8 1106.5,557.0 1114.5,577.8 1122.5,577.8 1130.5,557.0 1138.5,557.0 1146.5,557.0 1154.5,536.2 1162.5,536.2 1170.5,536.2 1178.5,515.4 1186.5,515.4 1194.5,515.4 1202.5,515.4 1210.5,536.2 1218.5,536.2 1226.5,536.2 1234.5,536.2 1242.5,536.2 1250.5,536.2 1258.5,515.4 1266.5,473.8 1274.5,494.6 1282.5,494.6 1290.5,494.6 1298.5,473.8 1306.5,473.8 1314.5,494.6 1322.5,494.6 1330.5,473.8 1338.5,494.6 1346.5,473.8 1354.5,494.6 1362.5,494.6" stroke="#ffff00"/><polyline points="82.5,349.0 90.5,411.4 98.5,494.6 106.5,577.8 114.5,536.2 122.5,536.2 130.5,432.2 138.5,432.2 146.5,473.8 154.5,536.2 162.5,473.8 170.5,473.8 178.5,473.8 186.5,515.4 194.5,494.6 202.5,536.2 210.5,536.2 218.5,473.8 226.5,494.6 234.5,515.4 242.5,473.8 250.5,411.4 258.5,349.0 266.5,453.0 274.5,432.2 282.5,661.0 290.5,609.0 298.5,577.8 306.5,515.4 314.5,536.2 322.5,494.6 330.5,494.6 338.5,536.2 346.5,515.4 354.5,567.4 362.5,619.4 370.5,640.2 378.5,619.4 386.5,619.4 394.5,567.4 402.5,473.8 410.5,494.6 418.5,536.2 426.5,577.8 434.5,640.2 442.5,598.6 450.5,619.4 458.5,567.4 466.5,515.4 474.5,411.4 482.5,411.4 490.5,473.8 498.5,557.0 506.5,577.8 514.5,598.6 522.5,525.8 530.5,494.6 538.5,536.2 546.5,505.0 554.5,473.8 562.5,515.4 570.5,536.2 578.5,453.0 586.5,453.0 594.5,536.2 602.5,515.4 610.5,515.4 618.5,515.4 626.5,577.8 634.5,619.4 642.5,536.2 650.5,567.4 658.5,598.6 666.5,536.2 674.5,515.4 682.5,536.2 690.5,557.0 698.5,557.0 706.5,515.4 714.5,557.0 722.5,536.2 730.5,557.0 738.5,494.6 746.5,536.2 754.5,515.4 762.5,598.6 770.5,577.8 778.5,557.0 786.5,515.4 794.5,515.4 802.5,598.6 810.5,453.0 818.5,536.2 826.5,536.2 834.5,515.4 842.5,536.2 850.5,494.6 858.5,536.2 866.5,515.4 874.5,494.6 882.5,515.4 890.5,515.4 898.5,494.6 906.5,525.8 914.5,557.0 922.5,557.0 930.5,536.2 938.5,557.0 946.5,557.0 954.5,536.2 962.5,505.0 970.5,473.8 978.5,546.6 986.5,619.4 994.5,598.6 1002.5,546.6 1010.5,494.6 1018.5,557.0 1026.5,453.0 1034.5,453.0 1042.5,577.8 1050.5,453.0 1058.5,536.2 1066.5,536.2 1074.5,473.8 1082.5,473.8 1090.5,494.6 1098.5,494.6 1106.5,557.0 1114.5,557.0 1122.5,557.0 1130.5,557.0 1138.5,577.8 1146.5,536.2 1154.5,536.2 1162.5,515.4 1170.5,515.4 1178.5,515.4 1186.5,515.4 1194.5,515.4 1202.5,557.0 1210.5,536.2 1218.5,557.0 1226.5,536.2 1234.5,494.6 1242.5,515.4 1250.5,536.2 1258.5,515.4 1266.5,515.4 1274.5,515.4 1282.5,515.4 1290.5,515.4 1298.5,494.6 1306.5,473.8 1314.5,473.8 1322.5,494.6 1330.5,515.4 1338.5,494.6 1346.5,494.6 1354.5,473.8 1362.5,494.6" stroke="#008000"/><polyline points="82.5,432.2 90.5,411.4 98.5,473.8 106.5,515.4 114.5,577.8 122.5,536.2 130.5,515.4 138.5,473.8 146.5,473.8 154.5,515.4 162.5,515.4 170.5,494.6 178.5,473.8 186.5,494.6 194.5,494.6 202.5,536.2 210.5,505.0 218.5,473.8 226.5,473.8 234.5,494.6 242.5,494.6 250.5,473.8 258.5,369.8 266.5,411.4 274.5,453.0 282.5,473.8 290.5,577.8 298.5,577.8 306.5,577.8 314.5,536.2 322.5,536.2 330.5,494.6 338.5,494.6 346.5,557.0 354.5,588.2 362.5,619.4 370.5,619.4 378.5,640.2 386.5,598.6 394.5,557.0 402.5,515.4 410.5,494.6 418.5,536.2 426.5,577.8 434.5,619.4 442.5,619.4 450.5,577.8 458.5,515.4 466.5,515.4 474.5,494.6 482.5,432.2 490.5,432.2 498.5,525.8 506.5,640.2 514.5,598.6 522.5,473.8 530.5,515.4 538.5,536.2 546.5,505.0 554.5,473.8 562.5,494.6 570.5,473.8 578.5,494.6 586.5,473.8 594.5,494.6 602.5,515.4 610.5,536.2 618.5,515.4 626.5,598.6 634.5,640.2 642.5,536.2 650.5,557.0 658.5,598.6 666.5,536.2 674.5,473.8 682.5,515.4 690.5,557.0 698.5,557.0 706.5,557.0 714.5,536.2 722.5,557.0 730.5,525.8 738.5,515.4 746.5,536.2 754.5,598.6 762.5,557.0 770.5,515.4 778.5,536.2 786.5,536.2 794.5,577.8 802.5,577.8 810.5,494.6 818.5,515.4 826.5,536.2 834.5,536.2 842.5,494.6 850.5,494.6 858.5,515.4 866.5,515.4 874.5,515.4 882.5,515.4 890.5,515.4 898.5,515.4 906.5,557.0 914.5,557.0 922.5,546.6 930.5,536.2 938.5,598.6 946.5,494.6 954.5,557.0 962.5,536.2 970.5,515.4 978.5,557.0 986.5,598.6 994.5,567.4 1002.5,494.6 1010.5,536.2 1018.5,536.2 1026.5,473.8 1034.5,515.4 1042.5,432.2 1050.5,484.2 1058.5,536.2 1066.5,525.8 1074.5,494.6 1082.5,473.8 1090.5,515.4 1098.5,557.0 1106.5,557.0 1114.5,536.2 1122.5,557.0 1130.5,577.8 1138.5,567.4 1146.5,557.0 1154.5,536.2 1162.5,536.2 1170.5,536.2 1178.5,515.4 1186.5,515.4 1194.5,515.4 1202.5,515.4 1210.5,536.2 1218.5,536.2 1226.5,515.4 1234.5,536.2 1242.5,536.2 1250.5,494.6 1258.5,515.4 1266.5,494.6 1274.5,473.8 1282.5,515.4 1290.5,515.4 1298.5,473.8 1306.5,473.8 1314.5,494.6 1322.5,494.6 1330.5,494.6 1338.5,473.8 1346.5,494.6 1354.5,494.6 1362.5,473.8" stroke="#0000ff"/></g><rect x="1359" y="408" width="7" height="7" fill="#fff" stroke="#f00" stroke-width="1"/><rect x="1359" y="554" width="7" height="7" fill="#fff"/><rect x="1378" y="401" width="18" height="1" fill="#f00"/><rect x="1401" y="401" width="19" height="1" fill="#f00"/><rect x="1425" y="401" width="3" height="1" fill="#f00"/><rect x="1383" y="420" width="19" height="1" fill="#f00"/><rect x="1407" y="420" width="19" height="1" fill="#f00"/><rect x="1378" y="401" width="1" height="18" fill="#f00"/><rect x="1427" y="401" width="1" height="16" fill="#f00"/><text x="1382" y="417.2" font-size="16" fill="#f00" font-family="Liberation Sans" textLength="45" lengthAdjust="spacingAndGlyphs">2.4800</text><rect x="1378" y="547" width="18" height="1" fill="#fff"/><rect x="1401" y="547" width="19" height="1" fill="#fff"/><rect x="1425" y="547" width="3" height="1" fill="#fff"/><rect x="1383" y="566" width="19" height="1" fill="#fff"/><rect x="1407" y="566" width="19" height="1" fill="#fff"/><rect x="1378" y="547" width="1" height="18" fill="#fff"/><rect x="1427" y="547" width="1" height="16" fill="#fff"/><text x="1382" y="563.2" font-size="16" fill="#fff" font-family="Liberation Sans" textLength="45" lengthAdjust="spacingAndGlyphs">2.4100</text><g shape-rendering="crispEdges"><rect x="87" y="91" width="8" height="11" fill="#e8372b"/><rect x="88" y="92" width="7" height="9" fill="#fff"/><rect x="95" y="91" width="7" height="11" fill="#0d5fb0"/><rect x="95" y="92" width="6" height="9" fill="#bfe0ff"/><rect x="89" y="93" width="5" height="1" fill="#e8372b"/><rect x="89" y="96" width="5" height="1" fill="#e8372b"/><rect x="89" y="99" width="5" height="1" fill="#e8372b"/><rect x="96" y="93" width="5" height="1" fill="#0d5fb0"/><rect x="96" y="96" width="5" height="1" fill="#0d5fb0"/><rect x="96" y="99" width="5" height="1" fill="#0d5fb0"/><rect x="108" y="91" width="7" height="11" fill="#e8372b"/><rect x="109" y="93" width="5" height="8" fill="#ffdcd0"/><rect x="111" y="91" width="4" height="5" fill="#000"/><rect x="111" y="95" width="4" height="1" fill="#e8372b"/><rect x="116" y="91" width="7" height="11" fill="#0d5fb0"/><rect x="117" y="94" width="5" height="7" fill="#b8dcff"/><rect x="116" y="91" width="3" height="4" fill="#000"/><rect x="116" y="94" width="3" height="1" fill="#0d5fb0"/><rect x="113" y="91" width="4" height="2" fill="#ccc"/></g><text x="129" y="100" font-size="9" fill="#fff" font-family="Liberation Sans" textLength="291" lengthAdjust="spacingAndGlyphs">XTIUSD, M1:  美国轻质原油现货 US Dollar vs Crude Oil #N-XTI/USD</text><text x="1651" y="100" font-size="10" fill="#fff" font-family="Liberation Sans">sdf</text><path d="M1668 95 L1676 91 L1684 95 L1676 99 Z" fill="#ddd" shape-rendering="auto"/><path d="M1671 97 L1671 101 Q1676 104 1681 101 L1681 97 L1676 99 Z" fill="#ddd" shape-rendering="auto"/><rect x="1668" y="95" width="1" height="8" fill="#ccc"/><text x="85" y="329" font-size="9" fill="#fff" font-family="Liberation Sans" textLength="202" lengthAdjust="spacingAndGlyphs">Π.EA 指标 价差1.3 2.4500 2.4500 2.4500 2.4400</text><g font-family="Liberation Mono" font-size="23.3" shape-rendering="auto"><g transform="translate(0,208) scale(1,1.17)"><text x="322" y="0" fill="#ffff00" textLength="294" lengthAdjust="spacingAndGlyphs" xml:space="preserve">HH 2.500 DH 2.500 buy</text><text x="714" y="0" fill="#ffff00" textLength="266" lengthAdjust="spacingAndGlyphs" xml:space="preserve">2.480=85.260-82.820</text></g><g transform="translate(0,239) scale(1,1.17)"><text x="322" y="0" fill="#008000" textLength="308" lengthAdjust="spacingAndGlyphs" xml:space="preserve">HL 2.390 DL 2.390 sell</text><text x="714" y="0" fill="#008000" textLength="266" lengthAdjust="spacingAndGlyphs" xml:space="preserve">2.410=85.230-82.780</text></g></g><g fill="none" stroke="#ffff00" stroke-width="1.6" stroke-linecap="round" shape-rendering="auto"><path transform="translate(618,186)" d="M8.3 1.6 L1.5 13.4 M5.6 9.8 L5.3 23 M14.7 0.7 L8.3 10.7 M14.7 1.6 Q18 7 24.7 10.5 M12.9 9.8 Q12 18 8.3 21.7 M17 10.2 L17.4 23.5"/><path transform="translate(648,186)" d="M5.7 2 L9.4 4.3 M15.8 1.1 L12.1 4.8 M4.8 5.7 L15.8 5.2 M5.3 10.2 L14.8 9.3 M2.5 13.9 L17.1 13 M9.8 7.5 Q8 16 0.2 22.6 M8 16.6 L16.2 15.7 M11.2 16.6 L11.6 21.7 M4.3 21.9 L20.3 21.2"/></g><g fill="none" stroke="#008000" stroke-width="1.6" stroke-linecap="round" shape-rendering="auto"><path transform="translate(632,217)" d="M8.3 1.6 L1.5 13.4 M5.6 9.8 L5.3 23 M14.7 0.7 L8.3 10.7 M14.7 1.6 Q18 7 24.7 10.5 M12.9 9.8 Q12 18 8.3 21.7 M17 10.2 L17.4 23.5"/><path transform="translate(662,217)" d="M5.7 2 L9.4 4.3 M15.8 1.1 L12.1 4.8 M4.8 5.7 L15.8 5.2 M5.3 10.2 L14.8 9.3 M2.5 13.9 L17.1 13 M9.8 7.5 Q8 16 0.2 22.6 M8 16.6 L16.2 15.7 M11.2 16.6 L11.6 21.7 M4.3 21.9 L20.3 21.2"/></g></svg><div class="a" style="left:80px;top:715px;width:1656px;height:24px;background:#f0f0f0"></div><div class="a" style="left:80px;top:717px;width:100px;height:21px;background:#f0f0f0;border-top:1px solid #000;border-left:1px solid #a0a0a0;font-size:12px;color:#777;text-align:center;line-height:20px">XAUUSD,M1</div><div class="a" style="left:179px;top:715px;width:88px;height:23px;background:#fff;border:1px solid #000;border-top:none;font-size:12px;color:#000;text-align:center;line-height:22px">XTIUSD,M1</div><div class="a" style="left:1693px;top:724px;width:0;height:0;border:4px solid transparent;border-right:4px solid #b0b0b0;border-left:none"></div><div class="a" style="left:1718px;top:724px;width:0;height:0;border:4px solid transparent;border-left:4px solid #b0b0b0;border-right:none"></div><div class="a" style="left:0;top:743px;width:1736px;height:1px;background:#a0a0a0"></div><div class="a" style="left:0;top:744px;width:1716px;height:97px;background:#fff"></div><div class="a" style="left:1716px;top:744px;width:20px;height:97px;background:#f0f0f0"></div><div class="a" style="left:0;top:768px;width:1716px;height:21px;background:#e9e9e9"></div><div class="a" style="left:0;top:810px;width:1716px;height:21px;background:#e9e9e9"></div><div class="a" style="left:0;top:788px;width:1716px;height:1px;background:#d4d4d4"></div><div class="a" style="left:0;top:809px;width:1716px;height:1px;background:#d4d4d4"></div><div class="a" style="left:0;top:830px;width:1716px;height:1px;background:#d4d4d4"></div><div class="a" style="left:7px;top:744px;width:1px;height:97px;background:#d0d0d0"></div><div class="a" style="left:187px;top:744px;width:1px;height:97px;background:#d0d0d0"></div><div class="a" style="left:14px;top:748px;font-size:12px;color:#000"><span class="cj" style="width:24px">来源</span></div><div class="a" style="left:194px;top:748px;font-size:12px;color:#000"><span class="cj" style="width:24px">消息</span></div><div class="a" style="left:-1px;top:770px;font-size:12px;color:#000">.</div><div class="a" style="left:11px;top:770px;font-size:12px;color:#000">Π.EA <span class="cj" style="width:24px">指标</span> <span class="cj" style="width:24px">价差</span>1.3 (XTIUSD,...</div><div class="a" style="left:191px;top:770px;font-size:11.5px;font-family:'Liberation Mono',monospace;color:#000">array out of range in 'Π.EA <span class="cj" style="width:24px">指标</span> <span class="cj" style="width:24px">价差</span>1.3.mq5' (162,29)</div><div class="a" style="left:-1px;top:791px;font-size:12px;color:#000">.</div><div class="a" style="left:11px;top:791px;font-size:12px;color:#000">Π.EA <span class="cj" style="width:24px">指标</span> <span class="cj" style="width:24px">价差</span>1.3 (XTIUSD,...</div><div class="a" style="left:191px;top:791px;font-size:11.5px;font-family:'Liberation Mono',monospace;color:#000">Alert: Π.EA <span class="cj" style="width:48px">加载成功</span></div><div class="a" style="left:-1px;top:812px;font-size:12px;color:#000">.</div><div class="a" style="left:11px;top:812px;font-size:12px;color:#000">Π.EA <span class="cj" style="width:24px">指标</span> <span class="cj" style="width:24px">价差</span>1.3 (XTIUSD,...</div><div class="a" style="left:191px;top:812px;font-size:11.5px;font-family:'Liberation Mono',monospace;color:#000"><span class="cj" style="width:96px">一鼠标点开旧世界</span>;</div><div class="a" style="left:-1px;top:833px;font-size:12px;color:#000">.</div><div class="a" style="left:11px;top:833px;font-size:12px;color:#000">Π.EA <span class="cj" style="width:24px">指标</span> <span class="cj" style="width:24px">价差</span>1.3 (XTIUSD,...</div><div class="a" style="left:191px;top:833px;font-size:11.5px;font-family:'Liberation Mono',monospace;color:#000"><span class="cj" style="width:96px">便键盘敲出新乾坤</span>;</div><div class="a" style="left:1733px;top:744px;width:2px;height:97px;background:#fff"></div><svg class="a" style="left:1716px;top:744px" width="18" height="20"><path d="M5 12 L9 8 L13 12" fill="none" stroke="#333" stroke-width="1.6"/></svg><svg class="a" style="left:1680px;top:814px" width="73" height="27"><rect x="2" y="2" width="19.5" height="19.5" rx="3" fill="#f4876a"/><circle cx="11.75" cy="13" r="6" fill="#fff" fill-opacity="0.95"/><rect x="8" y="11" width="7.5" height="4" rx="2" fill="#f4876a"/><circle cx="8" cy="6" r="1.2" fill="#fff"/><circle cx="15.5" cy="6" r="1.2" fill="#fff"/><text x="27" y="17" font-family="Liberation Serif" font-weight="bold" font-size="13" fill="#f4876a" fill-opacity="0.9">EAHub</text></svg></body></html>
